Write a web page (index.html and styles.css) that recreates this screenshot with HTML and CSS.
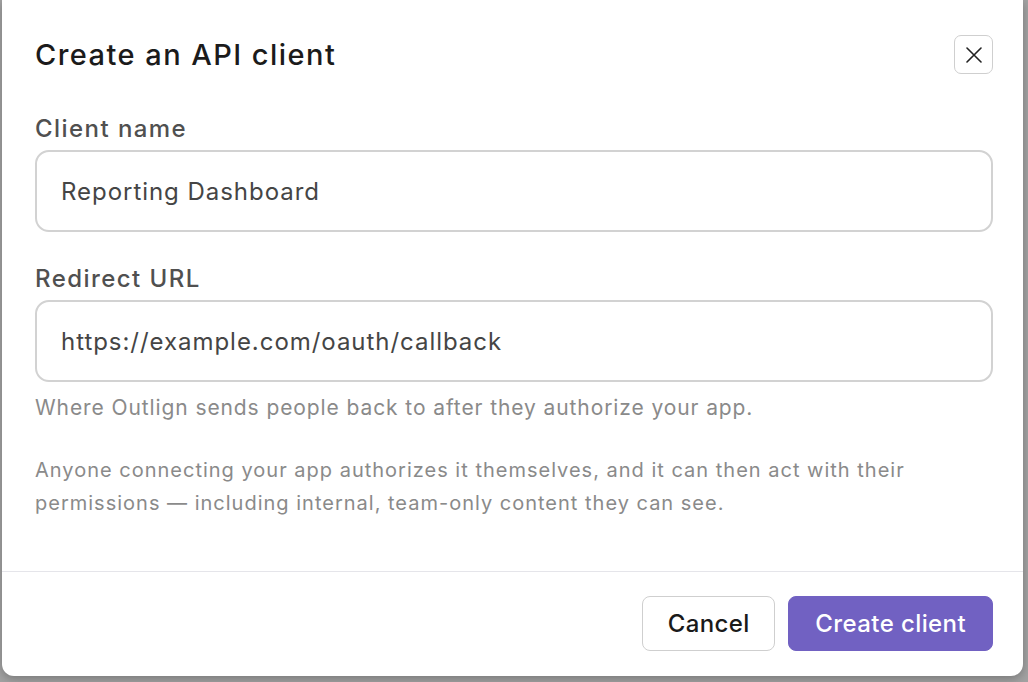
FILE: index.html
```html
<!DOCTYPE html>
<html>
<head>
    <title>Create an API client</title>
    <link rel="stylesheet" href="styles.css">
</head>
<body>
    <div class="modal">
        <div class="modal-header">
            <h1>Create an API client</h1>
            <button class="close-button" aria-label="Close">
                <svg width="16" height="16" viewBox="0 0 16 16">
                    <path d="M1 1 L15 15 M15 1 L1 15" stroke="#222" stroke-width="1.6" stroke-linecap="round" fill="none"/>
                </svg>
            </button>
        </div>

        <div class="modal-body">
            <div class="field">
                <label for="client-name">Client name</label>
                <input type="text" id="client-name" value="Reporting Dashboard">
            </div>
            <div class="field">
                <label for="redirect-url">Redirect URL</label>
                <input type="text" id="redirect-url" value="https://example.com/oauth/callback">
                <p class="help">Where Outlign sends people back to after they authorize your app.</p>
            </div>
            <p class="note">Anyone connecting your app authorizes it themselves, and it can then act with their permissions — including internal, team-only content they can see.</p>
        </div>

        <div class="modal-footer">
            <button class="button">Cancel</button>
            <button class="button primary">Create client</button>
        </div>
    </div>
</body>
</html>
```

FILE: styles.css
```css
body {
    font-family: Inter, "Noto Sans", sans-serif;
    margin: 0;
    height: 682px;
    overflow: hidden;
    background-color: #a2a2a2;
}

.modal {
    margin: 0 5px 0 2px;
    height: 676px;
    background-color: #fff;
    border-radius: 0 0 12px 12px;
    box-shadow: 0 3px 10px rgba(0, 0, 0, 0.25);
    display: flex;
    flex-direction: column;
}

.modal-header {
    display: flex;
    justify-content: space-between;
    align-items: center;
    padding: 35px 30px 0 33px;
}

h1 {
    margin: 0;
    font-size: 29px;
    font-weight: 500;
    letter-spacing: 0.05em;
    color: #1b1b1b;
    line-height: 39px;
}

.close-button {
    width: 39px;
    height: 39px;
    padding: 0;
    border: 1.5px solid #cfcfcf;
    border-radius: 7px;
    background: #fff;
    display: flex;
    align-items: center;
    justify-content: center;
    cursor: pointer;
}

.modal-body {
    padding: 39px 30px 0 33px;
}

.field {
    margin-bottom: 31px;
}

.field label {
    display: block;
    font-size: 24px;
    line-height: 32px;
    font-weight: 500;
    letter-spacing: 0.06em;
    color: #505050;
    margin-bottom: 5px;
}

.field input {
    display: block;
    box-sizing: border-box;
    width: 100%;
    height: 82px;
    padding: 0 24px;
    border: 2px solid #d2d2d2;
    border-radius: 14px;
    font-family: inherit;
    font-size: 24px;
    letter-spacing: 0.04em;
    color: #454545;
    outline: none;
}

.help {
    margin: 11px 0 0;
    font-size: 21px;
    line-height: 30px;
    letter-spacing: 0.043em;
    color: #8a8a8a;
}

.note {
    margin: 1px 0 0;
    font-size: 20px;
    line-height: 33px;
    letter-spacing: 0.05em;
    color: #8a8a8a;
}

.modal-footer {
    margin-top: auto;
    border-top: 1.5px solid #e5e5ea;
    display: flex;
    justify-content: flex-end;
    gap: 13px;
    padding: 24px 30px 25px;
}

.button {
    height: 55px;
    padding: 0 24.5px;
    border: 1.5px solid #cfcfcf;
    border-radius: 8px;
    background: #fff;
    font-family: inherit;
    font-size: 24px;
    font-weight: 500;
    letter-spacing: 0.4px;
    color: #1a1a1a;
    cursor: pointer;
}

.button.primary {
    padding: 0 26px;
    background-color: #7161c2;
    border-color: #7161c2;
    color: #fff;
}
```
